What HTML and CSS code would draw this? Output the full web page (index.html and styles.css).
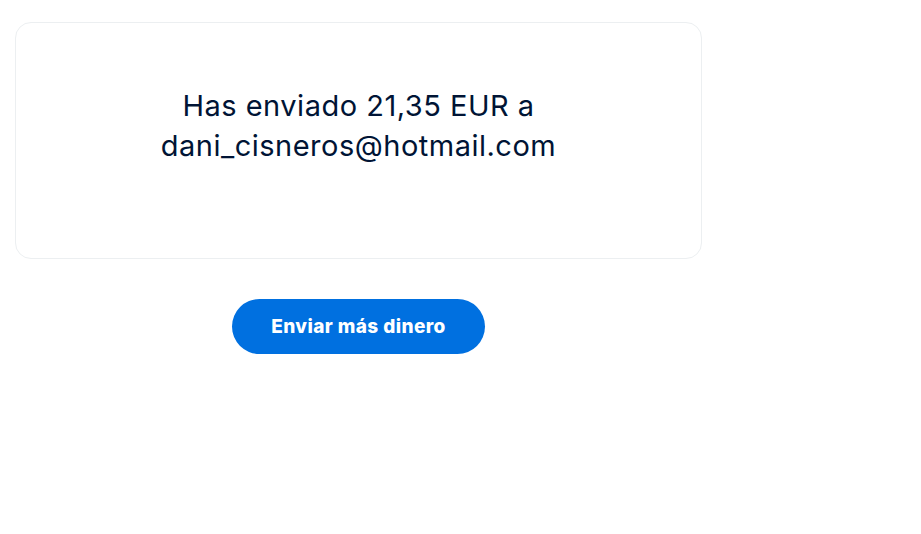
FILE: index.html
```html
<!DOCTYPE html>
<html lang="es">
<head>
  <meta charset="UTF-8">
  <meta name="viewport" content="width=device-width, initial-scale=1.0">
  <title>Pago enviado</title>
  <link rel="stylesheet" href="styles.css">
</head>
<body>
  <main class="wrap">
    <!-- Confirmation card -->
    <section class="card">
      <p class="msg">Has enviado 21,35 EUR a dani_cisneros@hotmail.com</p>
    </section>

    <div class="actions">
      <button class="btn-primary">Enviar más dinero</button>
    </div>
  </main>
</body>
</html>
```

FILE: styles.css
```css
body { margin: 0; background-color: #fff; font-family: Inter, "Noto Sans", Arial, sans-serif; color: #001435; }
.wrap { width: 687px; margin: 22px 0 0 15px; }
.card { box-sizing: border-box; height: 237px; border: 1px solid #eceff1; border-radius: 16px; display: flex; justify-content: center; padding: 63px 100px 0; }
.msg { margin: 0; font-size: 29px; letter-spacing: 0.5px; line-height: 40px; text-align: center; font-weight: 400; }
.actions { display: flex; justify-content: center; margin-top: 40px; }
.btn-primary { width: 253px; height: 55px; border: none; border-radius: 28px; background-color: #0070e0; color: #fff; font-family: Inter, Arial, sans-serif; font-size: 19px; font-weight: 800; letter-spacing: 0.4px; cursor: pointer; }
```
